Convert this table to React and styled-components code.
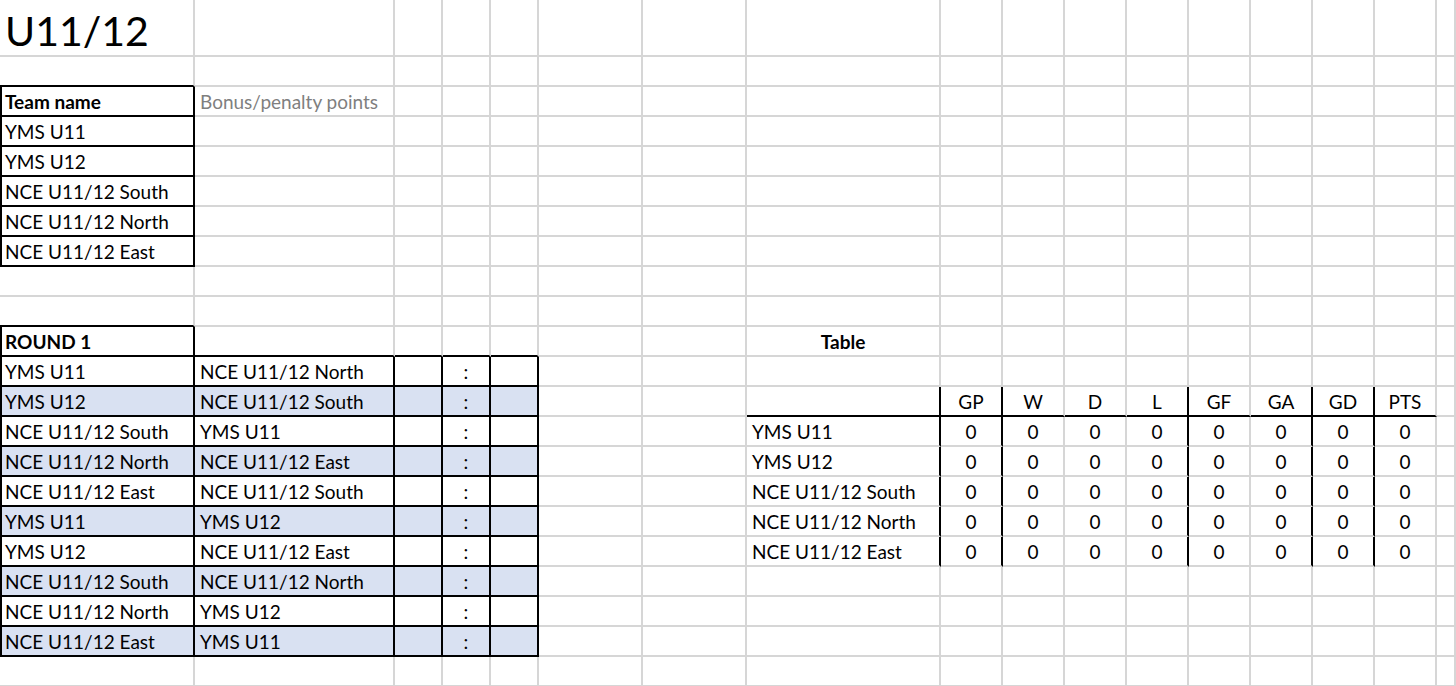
import React from "react";
import styled, { createGlobalStyle } from "styled-components";

const GRID = "#d6d6d6";
const FILL = "#d9e1f2";

const Global = createGlobalStyle`
  html, body { margin: 0; padding: 0; background: #fff; }
  body { font-family: Lato, "Liberation Sans", sans-serif; color: #000; overflow: hidden; }
`;

const Sheet = styled.div`
  display: grid;
  width: 100vw;
  grid-template-columns: 195px 200px 48px 48px 48px 104px 104px 194px repeat(8, 62px) 1fr;
  grid-template-rows: 57px repeat(21, 30px);
  font-size: 19px;
`;

const Cell = styled.div`
  box-sizing: border-box;
  display: flex;
  align-items: flex-end;
  justify-content: ${(p) => (p.$align === "center" ? "center" : "flex-start")};
  padding-bottom: ${(p) => (p.$title ? "0px" : "1px")};
  padding-left: ${(p) => (p.$align === "center" ? "0" : p.$l ? "3px" : "5px")};
  border-right: 2px solid ${(p) => (p.$r ? "#000" : GRID)};
  border-bottom: 2px solid ${(p) => (p.$b ? "#000" : GRID)};
  border-left: ${(p) => (p.$l ? "2px solid #000" : "none")};
  background: ${(p) => (p.$fill ? FILL : "transparent")};
  white-space: nowrap;
  min-width: 0;
`;

const Text = styled.span`
  font-weight: ${(p) => (p.$bold ? 700 : 400)};
  color: ${(p) => (p.$muted ? "#7f7f7f" : "#000")};
  line-height: 1.2;
`;

const Title = styled.span`
  font-size: 41px;
  line-height: 1.2;
  font-weight: 400;
`;

const COLS = 17;
const NROWS = 22;

const teams = ["YMS U11", "YMS U12", "NCE U11/12 South", "NCE U11/12 North", "NCE U11/12 East"];
const matches = [
  ["YMS U11", "NCE U11/12 North"],
  ["YMS U12", "NCE U11/12 South"],
  ["NCE U11/12 South", "YMS U11"],
  ["NCE U11/12 North", "NCE U11/12 East"],
  ["NCE U11/12 East", "NCE U11/12 South"],
  ["YMS U11", "YMS U12"],
  ["YMS U12", "NCE U11/12 East"],
  ["NCE U11/12 South", "NCE U11/12 North"],
  ["NCE U11/12 North", "YMS U12"],
  ["NCE U11/12 East", "YMS U11"],
];
const headers = ["GP", "W", "D", "L", "GF", "GA", "GD", "PTS"];

function buildSheet() {
  const g = Array.from({ length: NROWS }, () => Array.from({ length: COLS }, () => ({})));
  g[0][0] = { title: "U11/12" };

  // team list box
  g[1][0].b = true;
  g[2][0] = { text: "Team name", bold: true, l: true, r: true, b: true };
  g[2][1] = { text: "Bonus/penalty points", muted: true };
  teams.forEach((t, i) => {
    g[3 + i][0] = { text: t, l: true, r: true, b: true };
  });

  // round box
  g[9][0].b = true;
  g[10][0] = { text: "ROUND 1", bold: true, l: true, r: true, b: true };
  for (let c = 1; c <= 4; c++) g[10][c].b = true;
  matches.forEach(([home, away], i) => {
    const r = 11 + i;
    const fill = i % 2 === 1;
    g[r][0] = { text: home, l: true, r: true, b: true, fill };
    g[r][1] = { text: away, r: true, b: true, fill };
    g[r][2] = { r: true, b: true, fill };
    g[r][3] = { text: ":", align: "center", r: true, b: true, fill };
    g[r][4] = { r: true, b: true, fill };
  });

  // standings table
  g[10][7] = { text: "Table", bold: true, align: "center" };
  const blackRight = [7, 8, 11, 13, 14];
  g[12][7] = { b: true };
  headers.forEach((h, i) => {
    g[12][8 + i] = { text: h, align: "center", b: true };
  });
  teams.forEach((t, i) => {
    const r = 13 + i;
    g[r][7] = { text: t };
    headers.forEach((_, j) => {
      g[r][8 + j] = { text: "0", align: "center" };
    });
  });
  for (let r = 12; r <= 17; r++) blackRight.forEach((c) => (g[r][c].r = true));
  return g;
}

const sheet = buildSheet();

export default function App() {
  return (
    <>
      <Global />
      <Sheet>
        {sheet.map((row, ri) =>
          row.map((c, ci) => (
            <Cell
              key={`${ri}-${ci}`}
              $r={c.r}
              $b={c.b}
              $l={c.l}
              $fill={c.fill}
              $align={c.align}
              $title={!!c.title}
            >
              {c.title ? <Title>{c.title}</Title> : null}
              {c.text ? (
                <Text $bold={c.bold} $muted={c.muted}>
                  {c.text}
                </Text>
              ) : null}
            </Cell>
          ))
        )}
      </Sheet>
    </>
  );
}
